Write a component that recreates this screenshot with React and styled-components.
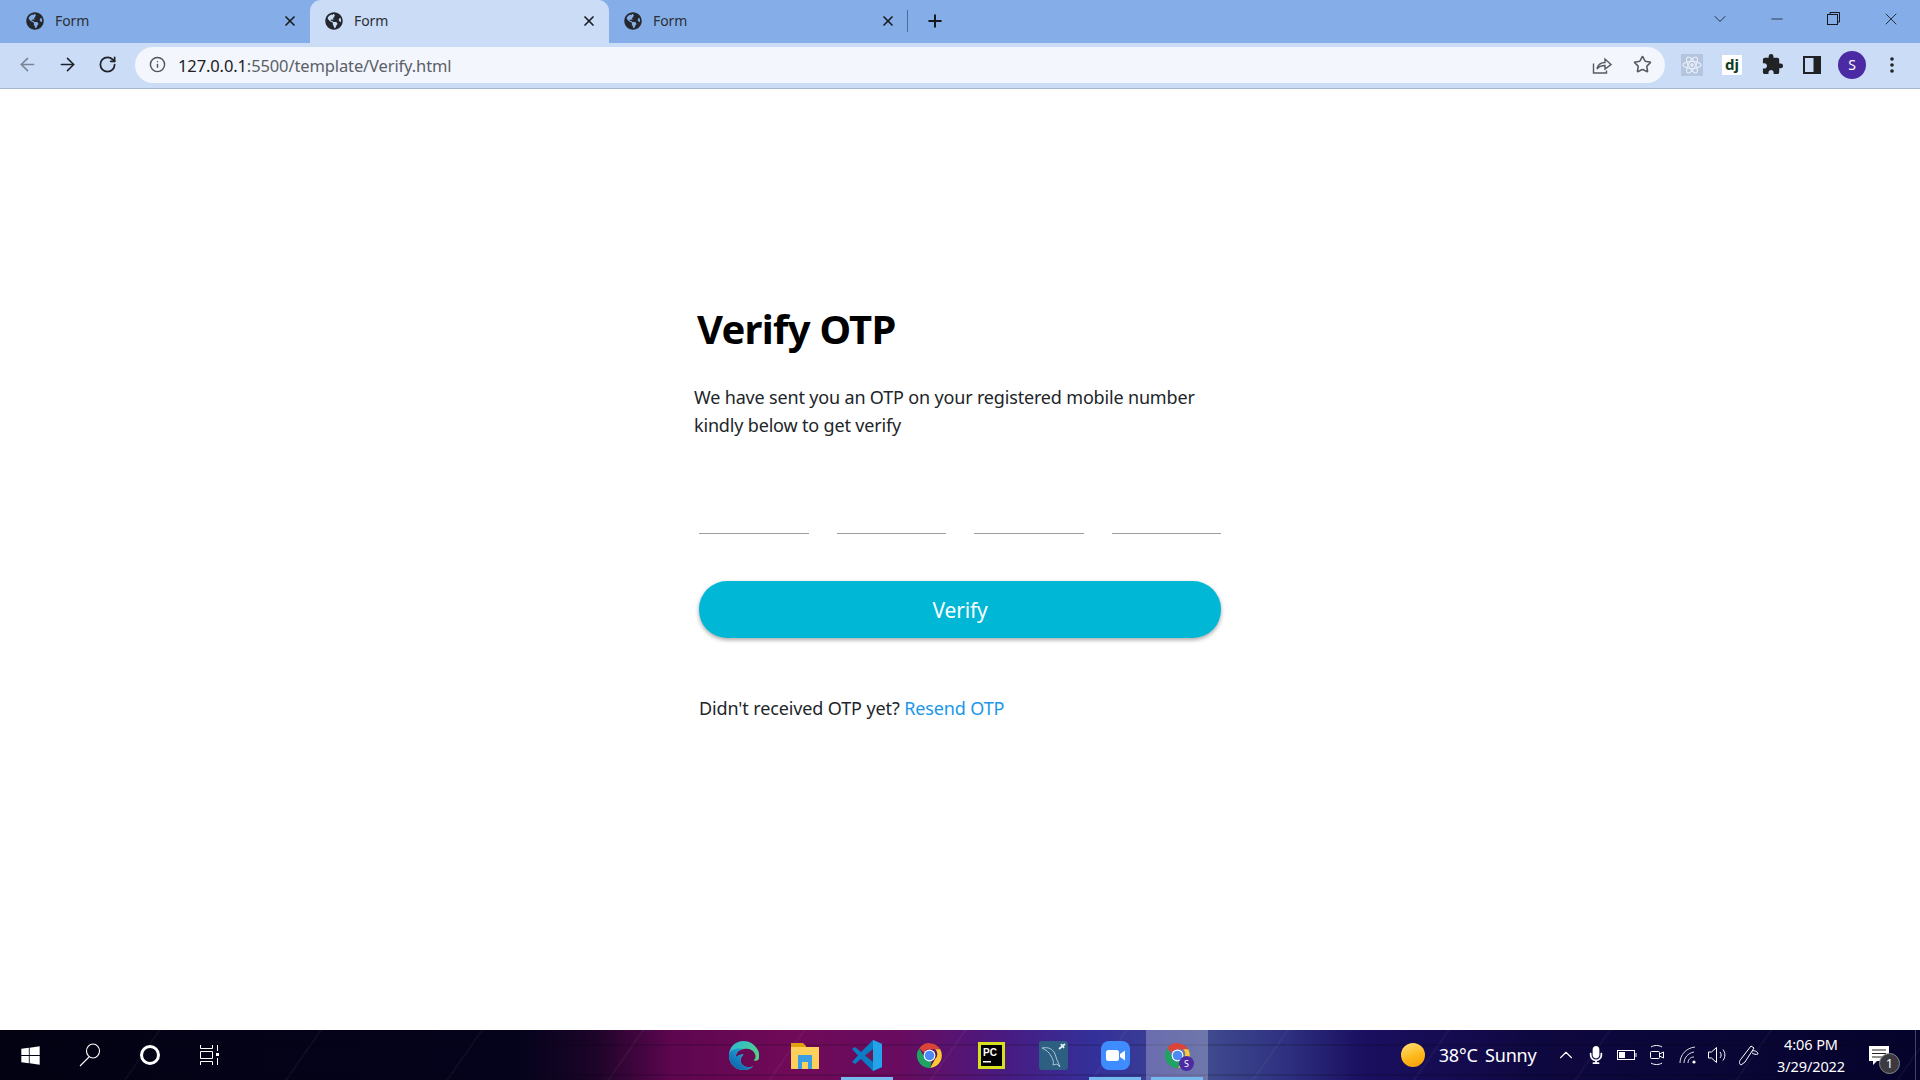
import styled, { createGlobalStyle } from "styled-components"
import { ArrowLeft, ArrowRight, RotateCw, Info, Star, Plus, X, ChevronDown, ChevronUp, Minus } from "lucide-react"
import { FaGlobeAmericas, FaWindows, FaMicrophone } from "react-icons/fa"
import { MdExtension } from "react-icons/md"

const UI_FONT = `"Noto Sans", "Open Sans", sans-serif`

const GlobalStyle = createGlobalStyle`
  html, body { margin: 0; padding: 0; height: 100%; background: #fff; }
  * { box-sizing: border-box; }
`

const Page = styled.div`
  width: 1920px;
  height: 1080px;
  display: flex;
  flex-direction: column;
  overflow: hidden;
  font-family: ${UI_FONT};
`

/* browser chrome */
const TabStrip = styled.div`
  height: 43px;
  background: #85aee9;
  display: flex;
  padding-left: 11px;
  flex-shrink: 0;
`
const Tab = styled.div`
  width: 299px;
  height: 43px;
  padding: 0 12px 2px 15px;
  display: flex;
  align-items: center;
  position: relative;
  color: #2b2f36;
  background: ${({ $active }) => ($active ? "#cbdcf6" : "transparent")};
  border-radius: 11px 11px 0 0;
  &::after {
    content: "";
    display: ${({ $sep }) => ($sep ? "block" : "none")};
    position: absolute;
    right: 0;
    top: 10px;
    height: 22px;
    width: 1px;
    background: #4f6c96;
  }
`
const TabTitle = styled.span`
  margin-left: 11px;
  font-size: 14px;
  letter-spacing: -0.1px;
  flex: 1;
`
const NewTab = styled.div`
  width: 56px;
  height: 41px;
  padding-right: 2px;
  display: flex;
  align-items: center;
  justify-content: center;
  color: #16181c;
`
const WindowControls = styled.div`
  margin-left: auto;
  display: flex;
  height: 37px;
  align-items: center;
  color: #14181f;
`
const WinBtn = styled.div`
  width: ${({ $w }) => $w || 57}px;
  display: flex;
  align-items: center;
  justify-content: center;
`
const Toolbar = styled.div`
  height: 46px;
  background: #cbdcf6;
  border-bottom: 1px solid #a5b6cf;
  display: flex;
  align-items: center;
  padding: 0 7px 2px 7px;
  flex-shrink: 0;
`
const NavBtn = styled.div`
  width: 40px;
  display: flex;
  justify-content: center;
  color: ${({ $dim }) => ($dim ? "#7a8494" : "#1f2329")};
`
const Omnibox = styled.div`
  width: 1530px;
  height: 36px;
  margin-left: 8px;
  margin-right: 7px;
  border-radius: 18px;
  background: #f3f6fc;
  display: flex;
  align-items: center;
  padding-left: 14px;
  padding-right: 3px;
  color: #50555c;
`
const Url = styled.div`
  margin-left: 12px;
  padding-top: 1px;
  font-size: 16.5px;
  letter-spacing: -0.12px;
  color: #5b6068;
  flex: 1;
  b { font-weight: 400; color: #1d2025; }
`
const OmniIcon = styled.div`
  width: 40px;
  display: flex;
  justify-content: center;
  color: #555a62;
`
const ExtBtn = styled.div`
  width: 40px;
  height: 36px;
  display: flex;
  align-items: center;
  justify-content: center;
  color: #202226;
`
const DjIcon = styled.div`
  width: 20px;
  height: 20px;
  background: #fff;
  color: #0c3c26;
  font: 700 15px/18px ${UI_FONT};
  text-align: center;
`
const Avatar = styled.div`
  width: 28px;
  height: 28px;
  border-radius: 50%;
  background: #4c2aa3;
  color: #fff;
  font-size: 14px;
  display: flex;
  align-items: center;
  justify-content: center;
`

/* page content */
const Content = styled.main`
  flex: 1;
  background: #fff;
  padding: 210px 0 0 694px;
  color: #212529;
`
const Card = styled.div`
  width: 540px;
`
const Heading = styled.h1`
  margin: 0 0 0 3px;
  font-size: 40px;
  line-height: 60px;
  font-weight: 700;
  letter-spacing: -0.75px;
  color: #000;
`
const Message = styled.p`
  margin: 24px 0 0;
  font-size: 18px;
  line-height: 28px;
  letter-spacing: -0.17px;
  width: 520px;
`
const OtpRow = styled.div`
  display: flex;
  gap: 28px;
  margin: 50px 0 0 5px;
`
const OtpInput = styled.input`
  width: 109.5px;
  height: 45px;
  border: 0;
  border-bottom: 1px solid #9e9e9e;
  outline: none;
  background: transparent;
`
const VerifyButton = styled.button`
  display: block;
  width: 522px;
  height: 57px;
  margin: 47px 0 0 5px;
  border: 0;
  border-radius: 28px;
  background: #00b8d6;
  color: #fff;
  font: 400 21px ${UI_FONT};
  letter-spacing: -0.2px;
  box-shadow: 0 2px 4px rgba(0, 0, 0, 0.35);
`
const ResendLine = styled.p`
  margin: 56px 0 0 5px;
  font-size: 18px;
  line-height: 28px;
  letter-spacing: -0.12px;
  a { color: #1a97ea; text-decoration: none; }
`

/* taskbar */
const Taskbar = styled.footer`
  height: 50px;
  flex-shrink: 0;
  display: flex;
  align-items: center;
  color: #fff;
  background:
    repeating-linear-gradient(180deg, transparent 0 14px, rgba(0, 0, 0, 0.14) 14px 16px, transparent 16px 30px),
    repeating-linear-gradient(125deg, transparent 0 130px, rgba(255, 255, 255, 0.035) 130px 132px),
    linear-gradient(90deg, #020213 0, #05031c 27%, #1c0428 31%, #5e0650 35%, #700a58 41%, #680c60 47%, #4a1a80 52%, #34309a 57%, #3f4a8e 63%, #2e3080 67%, #1a0f60 71%, #0e0840 80%, #05032b 100%);
`
const StartGroup = styled.div`
  display: flex;
`
const SysBtn = styled.div`
  width: 60px;
  height: 50px;
  display: flex;
  align-items: center;
  justify-content: center;
`
const Pinned = styled.div`
  display: flex;
  margin-left: 472px;
`
const PinBtn = styled.div`
  width: 62px;
  height: 50px;
  display: flex;
  align-items: center;
  justify-content: center;
  position: relative;
  background: ${({ $focus }) => ($focus ? "rgba(255,255,255,0.25)" : "transparent")};
  &::after {
    content: "";
    display: ${({ $open }) => ($open ? "block" : "none")};
    position: absolute;
    left: 5px;
    right: 5px;
    bottom: 0;
    height: 3px;
    background: #76b9ed;
  }
`
const SubBadge = styled.span`
  position: absolute;
  left: 33px;
  top: 26px;
  width: 15px;
  height: 15px;
  border-radius: 50%;
  background: #4c2aa3;
  font-size: 9px;
  line-height: 15px;
  text-align: center;
`
const Tray = styled.div`
  margin-left: auto;
  display: flex;
  align-items: center;
  height: 50px;
  padding-right: 16px;
  position: relative;
  &::after {
    content: "";
    position: absolute;
    right: 4px;
    top: 0;
    bottom: 0;
    width: 1px;
    background: rgba(255, 255, 255, 0.25);
  }
`
const Sun = styled.div`
  width: 24px;
  height: 24px;
  border-radius: 50%;
  background: linear-gradient(160deg, #ffe27a, #fdb515 60%, #f59a0c);
  margin-right: 14px;
`
const Weather = styled.span`
  font-size: 18px;
  letter-spacing: -0.2px;
  word-spacing: 3px;
  margin-right: 14px;
`
const TrayIcon = styled.div`
  width: 30.5px;
  display: flex;
  justify-content: center;
`
const Clock = styled.div`
  width: 94px;
  font-size: 14.5px;
  line-height: 22px;
  text-align: center;
  letter-spacing: -0.1px;
`
const Notify = styled.div`
  width: 46px;
  display: flex;
  padding-left: 11px;
  position: relative;
`
const NotifyCount = styled.span`
  position: absolute;
  left: 21px;
  top: 7px;
  width: 21px;
  height: 21px;
  border-radius: 50%;
  background: #3a3a40;
  border: 1px solid #888;
  font-size: 13px;
  line-height: 19px;
  text-align: center;
`

const ChromeLogo = ({ size = 27 }) => (
  <svg width={size} height={size} viewBox="0 0 48 48">
    <path d="M24 2a22 22 0 0 1 19 11H24a11 11 0 0 0-10 6L6 11A22 22 0 0 1 24 2z" fill="#db4437" />
    <path d="M43 13a22 22 0 0 1-18 33l9-16a11 11 0 0 0 0-17z" fill="#fcc934" />
    <path d="M25 46A22 22 0 0 1 6 11l9 16a11 11 0 0 0 13 7z" fill="#1ea362" />
    <circle cx="24" cy="24" r="10.5" fill="#fff" />
    <circle cx="24" cy="24" r="8.5" fill="#4c8bf5" />
  </svg>
)

const EdgeLogo = () => (
  <svg width="31" height="31" viewBox="0 0 32 32">
    <defs>
      <linearGradient id="edgeA" x1="0" y1="1" x2="0.7" y2="0">
        <stop offset="0" stopColor="#0c59a4" />
        <stop offset="1" stopColor="#1fa6dc" />
      </linearGradient>
      <linearGradient id="edgeB" x1="0" y1="0" x2="1" y2="1">
        <stop offset="0" stopColor="#2bb6d8" />
        <stop offset="1" stopColor="#5fdc6a" />
      </linearGradient>
    </defs>
    <path d="M16 1C7 1 1 8 1 16c0 9 7 15 15 15 5 0 8-2 10-4-6 3-13 0-13-6 0-3 2-5 3-6-6 0-8 3-8 3 0-5 4-9 10-9 5 0 9 2 10 6 1 3 0 5-2 6 3 1 5 0 6-2 1-3 0-7-2-10C27 4 22 1 16 1z" fill="url(#edgeB)" />
    <path d="M1 16c0 9 7 15 15 15 5 0 8-2 10-4-6 3-13 0-13-6 0-3 2-5 3-6-6 0-8 3-8 3 0-5 3-8 7-9C8 8 1 10 1 16z" fill="url(#edgeA)" />
  </svg>
)

const FolderLogo = () => (
  <svg width="28" height="28" viewBox="0 0 28 28">
    <path d="M0 2h12l3 3v5H0z" fill="#e2a00f" />
    <path d="M0 6h28v22H0z" fill="#fdd05c" />
    <path d="M7 14h14v14h-4v-7h-6v7H7z" fill="#3a9ee4" />
  </svg>
)

const VsCodeLogo = () => (
  <svg width="30" height="31" viewBox="0 0 30 31">
    <path d="M21 0l9 4v23l-9 4-12-12-6 5-3-2 6-6.500-6-6.500 3-2 6 5z" fill="#0a7dc4" />
    <path d="M21 0l9 4v23l-9 4z" fill="#23a3ea" />
    <path d="M21 9l-8 6.500 8 6.500z" fill="#6a1a56" />
  </svg>
)

const PyCharmLogo = () => (
  <svg width="27" height="27" viewBox="0 0 27 27">
    <rect width="27" height="27" fill="#d6e01c" />
    <rect x="3" y="3" width="21" height="21" fill="#000" />
    <text x="5" y="14" fontSize="10" fontWeight="700" fill="#fff" fontFamily="Liberation Sans">PC</text>
    <rect x="5" y="19" width="8" height="1.500" fill="#fff" />
  </svg>
)

const MysqlLogo = () => (
  <svg width="29" height="29" viewBox="0 0 29 29">
    <rect width="29" height="29" rx="3" fill="#2c5f82" />
    <path d="M3 7c5-1 9 0 12 4 2 3 2 7 4 10l2 5-3-3-4 1c1-3 0-6-2-9-2-4-5-6-9-8z" fill="none" stroke="#b9cfdd" strokeWidth="0.900" />
    <path d="M20 8l6-5M22 3l3 4" stroke="#e4eef4" strokeWidth="1.800" fill="none" />
  </svg>
)

const ZoomLogo = () => (
  <svg width="29" height="29" viewBox="0 0 29 29">
    <rect width="29" height="29" rx="8" fill="#3f8cff" />
    <rect x="5" y="9" width="13" height="11" rx="2.500" fill="#fff" />
    <path d="M19 13l5-3.500v10L19 16z" fill="#fff" />
  </svg>
)

const ReactExt = () => (
  <svg width="22" height="22" viewBox="0 0 22 22">
    <rect width="22" height="22" fill="#b4c5de" />
    <g fill="none" stroke="#e8eef8" strokeWidth="1.200">
      <ellipse cx="11" cy="11" rx="9" ry="3.500" />
      <ellipse cx="11" cy="11" rx="9" ry="3.500" transform="rotate(60 11 11)" />
      <ellipse cx="11" cy="11" rx="9" ry="3.500" transform="rotate(120 11 11)" />
    </g>
    <circle cx="11" cy="11" r="1.800" fill="#e8eef8" />
  </svg>
)

const ShareIcon = () => (
  <svg width="20" height="20" viewBox="0 0 20 20" fill="none" stroke="#555a62" strokeWidth="1.400">
    <path d="M1.500 8.500v9.500h13v-2.500" />
    <path d="M5 14c1-4.500 4-6.500 8-6.500V4l6 5.500-6 4.500v-3.500c-3.500 0-6 1-8 3.500z" />
  </svg>
)

const SidePanelIcon = () => (
  <svg width="18" height="18" viewBox="0 0 18 18">
    <path d="M0 0h18v18H0z" fill="#202226" />
    <rect x="2" y="2" width="8.500" height="14" fill="#cbdcf6" />
  </svg>
)

const MenuDots = () => (
  <svg width="4" height="16" viewBox="0 0 4 16" fill="#202226">
    <circle cx="2" cy="2" r="1.800" />
    <circle cx="2" cy="8" r="1.800" />
    <circle cx="2" cy="14" r="1.800" />
  </svg>
)

const RestoreIcon = () => (
  <svg width="13" height="13" viewBox="0 0 13 13" fill="none" stroke="#14181f">
    <rect x="0.500" y="2.500" width="10" height="10" />
    <path d="M3 2.500V.5h9.500V10h-2" />
  </svg>
)

const SearchGlyph = () => (
  <svg width="22" height="24" viewBox="0 0 22 24" fill="none" stroke="#fff" strokeWidth="1.100">
    <ellipse cx="14" cy="8" rx="6.500" ry="7" />
    <path d="M10 14L1 23" />
  </svg>
)

const CortanaRing = styled.div`
  width: 20px;
  height: 20px;
  border-radius: 50%;
  border: 3px solid #fff;
`

const TaskViewIcon = () => (
  <svg width="20" height="20" viewBox="0 0 20 20" fill="none" stroke="#fff">
    <path d="M.5 0v3.500h12V0M.5 6.500h12v7H.5zM.5 20v-3.500h12V20M17.500 0v6M17.500 13v7" />
    <rect x="16" y="8" width="3" height="3" fill="#fff" stroke="none" />
  </svg>
)

const BatteryIcon = () => (
  <svg width="20" height="12" viewBox="0 0 20 12" fill="none" stroke="#fff">
    <rect x="0.500" y="1.500" width="17" height="9" />
    <rect x="2" y="3" width="6" height="6" fill="#fff" stroke="none" />
    <path d="M19 4v4" />
  </svg>
)

const VideoIcon = () => (
  <svg width="16" height="20" viewBox="0 0 16 20" fill="none" stroke="#fff">
    <path d="M2 2c3-2 8-2 11 0M2 18c3 2 8 2 11 0" />
    <rect x="1.500" y="6.500" width="9" height="7" rx="1" />
    <path d="M10.500 9l4-2v6l-4-2" />
  </svg>
)

const WifiIcon = () => (
  <svg width="18" height="18" viewBox="0 0 18 18" fill="none" stroke="#fff">
    <path d="M1 17C1 9 7 2 16 1M5 17c0-5 4-10 10-11M9 17c0-3 2-6 6-6" opacity="0.85" />
    <circle cx="15" cy="16" r="1.600" fill="#fff" stroke="none" />
  </svg>
)

const SpeakerIcon = () => (
  <svg width="22" height="20" viewBox="0 0 22 20" fill="none" stroke="#fff">
    <path d="M1.500 7v6h3l5 4.500v-15L4.500 7z" />
    <path d="M13 7c1.500 2 1.500 4 0 6M16 4.500c2.500 3.500 2.500 7.500 0 11" />
  </svg>
)

const PenIcon = () => (
  <svg width="22" height="22" viewBox="0 0 22 22" fill="none" stroke="#fff">
    <path d="M3 15L13 2l3 2L7 18l-4 3c-2-1-2-4 0-6z" />
    <path d="M14 7c3-1 6 1 6 3-2 1-4 0-6-1" />
  </svg>
)

const NotifyIcon = () => (
  <svg width="20" height="19" viewBox="0 0 20 19">
    <path d="M0 0h20v15H8l-4 4v-4H0z" fill="#fff" />
    <path d="M3 4h14M3 7.500h14M3 11h10" stroke="#222" />
  </svg>
)

const tabs = [{ id: 1 }, { id: 2, active: true }, { id: 3, sep: true }]
const exts = [
  <ReactExt key="react" />,
  <DjIcon key="dj">dj</DjIcon>,
  <MdExtension key="puzzle" size={23} />,
  <SidePanelIcon key="panel" />,
  <Avatar key="avatar">S</Avatar>,
  <MenuDots key="menu" />,
]

const App = () => {
  return (
    <Page>
      <GlobalStyle />
      <TabStrip>
        {tabs.map((t) => (
          <Tab key={t.id} $active={t.active} $sep={t.sep}>
            <FaGlobeAmericas size={18} color="#24282e" />
            <TabTitle>Form</TabTitle>
            <X size={16} strokeWidth={2.6} color="#1c1f24" />
          </Tab>
        ))}
        <NewTab>
          <Plus size={20} strokeWidth={2.4} />
        </NewTab>
        <WindowControls>
          <WinBtn $w={57}><ChevronDown size={20} strokeWidth={1} /></WinBtn>
          <WinBtn><Minus size={18} strokeWidth={1} /></WinBtn>
          <WinBtn><RestoreIcon /></WinBtn>
          <WinBtn $w={58}><X size={20} strokeWidth={1} /></WinBtn>
        </WindowControls>
      </TabStrip>
      <Toolbar>
        <NavBtn $dim><ArrowLeft size={21} strokeWidth={1.8} /></NavBtn>
        <NavBtn><ArrowRight size={21} strokeWidth={1.8} /></NavBtn>
        <NavBtn><RotateCw size={19} strokeWidth={2.2} /></NavBtn>
        <Omnibox>
          <Info size={17} strokeWidth={2} />
          <Url><b>127.0.0.1</b>:5500/template/Verify.html</Url>
          <OmniIcon><ShareIcon /></OmniIcon>
          <OmniIcon><Star size={19} strokeWidth={2} /></OmniIcon>
        </Omnibox>
        {exts.map((e) => <ExtBtn key={e.key}>{e}</ExtBtn>)}
      </Toolbar>

      <Content>
        <Card>
          <Heading>Verify OTP</Heading>
          <Message>We have sent you an OTP on your registered mobile number kindly below to get verify</Message>
          <OtpRow>
            <OtpInput maxLength={1} />
            <OtpInput maxLength={1} />
            <OtpInput maxLength={1} />
            <OtpInput maxLength={1} />
          </OtpRow>
          <VerifyButton>Verify</VerifyButton>
          <ResendLine>Didn't received OTP yet? <a href="#resend">Resend OTP</a></ResendLine>
        </Card>
      </Content>

      <Taskbar>
        <StartGroup>
          <SysBtn><FaWindows size={21} /></SysBtn>
          <SysBtn><SearchGlyph /></SysBtn>
          <SysBtn><CortanaRing /></SysBtn>
          <SysBtn><TaskViewIcon /></SysBtn>
        </StartGroup>
        <Pinned>
          <PinBtn><EdgeLogo /></PinBtn>
          <PinBtn><FolderLogo /></PinBtn>
          <PinBtn $open><VsCodeLogo /></PinBtn>
          <PinBtn><ChromeLogo /></PinBtn>
          <PinBtn><PyCharmLogo /></PinBtn>
          <PinBtn><MysqlLogo /></PinBtn>
          <PinBtn $open><ZoomLogo /></PinBtn>
          <PinBtn $open $focus>
            <ChromeLogo />
            <SubBadge>S</SubBadge>
          </PinBtn>
        </Pinned>
        <Tray>
          <Sun />
          <Weather>38°C Sunny</Weather>
          <TrayIcon><ChevronUp size={22} strokeWidth={1.2} /></TrayIcon>
          <TrayIcon><FaMicrophone size={18} /></TrayIcon>
          <TrayIcon><BatteryIcon /></TrayIcon>
          <TrayIcon><VideoIcon /></TrayIcon>
          <TrayIcon><WifiIcon /></TrayIcon>
          <TrayIcon><SpeakerIcon /></TrayIcon>
          <TrayIcon><PenIcon /></TrayIcon>
          <Clock>4:06 PM<br />3/29/2022</Clock>
          <Notify>
            <NotifyIcon />
            <NotifyCount>1</NotifyCount>
          </Notify>
        </Tray>
      </Taskbar>
    </Page>
  )
}

export default App
